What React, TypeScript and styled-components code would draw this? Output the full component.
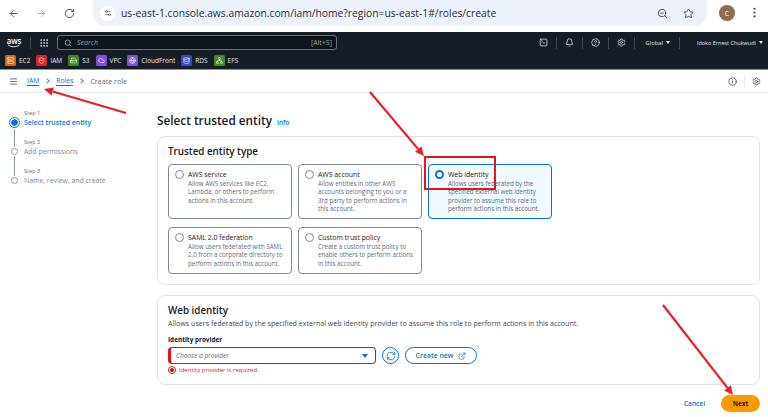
import React from "react";
import styled, { createGlobalStyle } from "styled-components";
import {
  ArrowLeft,
  ArrowRight,
  Bell,
  CircleHelp,
  Cloud,
  Database,
  ExternalLink,
  Globe,
  Grip,
  HardDrive,
  Info,
  Menu,
  MoreVertical,
  Network,
  RotateCw,
  Search,
  Server,
  Settings,
  Settings2,
  ShieldCheck,
  SquareTerminal,
  Star,
  ZoomOut,
  RefreshCw,
} from "lucide-react";

const GlobalStyle = createGlobalStyle`
  html, body { margin: 0; padding: 0; background: #fff; }
  body { font-family: "Open Sans", "Noto Sans", Arial, sans-serif; color: #16191f; }
  * { box-sizing: border-box; }
`;

const Page = styled.div`
  width: 768px;
  height: 417px;
  overflow: hidden;
  position: relative;
  display: flex;
  flex-direction: column;
`;

/* browser chrome */
const BrowserBar = styled.div`
  height: 32px;
  display: flex;
  align-items: flex-start;
  padding-left: 8px;
  background: #fff;
`;
const BrowserBtn = styled.div<{ $dim?: boolean }>`
  width: 28px;
  height: 26px;
  display: flex;
  align-items: center;
  color: ${(p) => (p.$dim ? "#a9abae" : "#444746")};
`;
const UrlPill = styled.div`
  margin-left: 1px;
  width: 614px;
  height: 26px;
  background: #edf2fa;
  border-radius: 0 0 13px 13px;
  display: flex;
  align-items: center;
  padding: 0 0 0 7px;
  color: #1f1f1f;
`;
const SiteChip = styled.div`
  width: 15px;
  height: 15px;
  border-radius: 50%;
  background: #fff;
  display: flex;
  align-items: center;
  justify-content: center;
  margin-right: 6px;
  color: #444746;
`;
const UrlText = styled.div`
  flex: 1;
  font-size: 10.3px;
  font-family: "Open Sans", sans-serif;
  white-space: nowrap;
  color: #2a2d31;
`;
const UrlIcons = styled.div`
  display: flex;
  gap: 15px;
  margin-right: 13px;
  color: #444746;
  align-items: center;
`;
const Avatar = styled.div`
  width: 16px;
  height: 16px;
  margin: 5px 0 0 12px;
  border-radius: 50%;
  background: #8f6a58;
  color: #fff;
  font-size: 7px;
  display: flex;
  align-items: center;
  justify-content: center;
`;
const KebabWrap = styled.div`
  margin: 6px 0 0 13px;
  color: #444746;
  display: flex;
`;

/* aws nav */
const TopNav = styled.div`
  height: 38px;
  background: #161d26;
  display: flex;
  flex-direction: column;
  color: #d5dbdb;
  border-bottom: 1px solid #8a9099;
`;
const NavRow = styled.div`
  height: 20px;
  display: flex;
  align-items: center;
  padding: 2px 0 0 6px;
`;
const Logo = styled.div`
  width: 16px;
  display: flex;
  flex-direction: column;
  align-items: center;
  font-size: 8px;
  font-weight: 600;
  line-height: 7px;
  color: #fff;
  letter-spacing: -0.2px;
`;
const VSep = styled.div`
  width: 1px;
  height: 12px;
  background: #414750;
  margin: 0 8px;
`;
const SearchBox = styled.div`
  margin-left: 8px;
  width: 280px;
  height: 15px;
  border: 1px solid #6b7078;
  border-radius: 3px;
  background: #0f141a;
  display: flex;
  align-items: center;
  padding: 0 4px 0 6px;
  font-size: 7px;
  color: #9aa0a8;
`;
const SearchHint = styled.span`
  flex: 1;
  margin-left: 5px;
  font-style: italic;
`;
const NavRight = styled.div`
  margin-left: auto;
  display: flex;
  align-items: center;
  padding-right: 5px;
  font-size: 5.8px;
  color: #e2e5e8;
  white-space: nowrap;
`;
const NavIconCell = styled.div`
  width: 26px;
  height: 12px;
  display: flex;
  align-items: center;
  justify-content: center;
  border-right: 1px solid #414750;
`;
const NavLabel = styled.div<{ $w: number; $sep?: boolean; $small?: boolean }>`
  width: ${(p) => p.$w}px;
  height: 12px;
  display: flex;
  align-items: center;
  justify-content: flex-end;
  gap: 3px;
  font-size: ${(p) => (p.$small ? "5.5px" : "5.8px")};
  padding-right: ${(p) => (p.$sep ? "9px" : "0")};
  border-right: ${(p) => (p.$sep ? "1px solid #414750" : "none")};
`;
const Caret = styled.span`
  width: 0;
  height: 0;
  border-left: 2px solid transparent;
  border-right: 2px solid transparent;
  border-top: 3px solid #e2e5e8;
`;
const Shortcuts = styled.div`
  height: 18px;
  display: flex;
  align-items: center;
  gap: 6px;
  padding-left: 5px;
  font-size: 6.5px;
  color: #e2e5e8;
`;
const Shortcut = styled.div`
  display: flex;
  align-items: center;
  gap: 3px;
`;
const Tile = styled.div<{ $bg: string }>`
  width: 11px;
  height: 11px;
  border-radius: 1.5px;
  background: ${(p) => p.$bg};
  display: flex;
  align-items: center;
  justify-content: center;
  color: #fff;
`;

/* breadcrumbs */
const CrumbBar = styled.div`
  height: 23px;
  display: flex;
  align-items: center;
  padding: 0 7px 0 9px;
  border-bottom: 1px solid #eeeff0;
  font-size: 7.1px;
  color: #5f6b7a;
`;
const MenuWrap = styled.div`
  display: flex;
  margin-right: 9px;
  color: #424650;
`;
const CrumbLink = styled.span`
  color: #0972d3;
  border-bottom: 1px solid #0972d3;
  line-height: 9px;
  font-size: 6.8px;
`;
const CrumbSep = styled.span`
  width: 4px;
  height: 4px;
  margin: 0 7px 0 6px;
  border-top: 1px solid #7d8998;
  border-right: 1px solid #7d8998;
  transform: rotate(45deg);
`;
const CrumbTools = styled.div`
  margin-left: auto;
  display: flex;
  align-items: center;
  color: #424650;
`;
const CrumbToolSep = styled.div`
  width: 1px;
  height: 12px;
  background: #e9ebed;
  margin: 0 7px;
`;

/* body */
const Body = styled.div`
  flex: 1;
  display: flex;
  min-height: 0;
`;
const Sidebar = styled.div`
  width: 157px;
  padding: 16px 0 0 7px;
`;
const Step = styled.div`
  display: grid;
  grid-template-columns: 14px 1fr;
  column-gap: 3px;
  height: 29px;
`;
const StepTrack = styled.div`
  position: relative;
  padding-top: 9px;
  display: flex;
  flex-direction: column;
  align-items: center;
`;
const StepLine = styled.div`
  flex: 1;
  width: 1px;
  background: #8d99a8;
  margin-top: 1px;
  margin-bottom: -9px;
`;
const StepDot = styled.div<{ $on?: boolean }>`
  width: ${(p) => (p.$on ? 11 : 7)}px;
  height: ${(p) => (p.$on ? 11 : 7)}px;
  margin-top: ${(p) => (p.$on ? -1 : 1)}px;
  border-radius: 50%;
  border: 1px solid ${(p) => (p.$on ? "#0972d3" : "#8d99a8")};
  background: ${(p) =>
    p.$on ? "radial-gradient(circle, #0972d3 0 3px, #fff 3.4px)" : "#fff"};
  flex-shrink: 0;
`;
const StepSmall = styled.div`
  font-size: 5.6px;
  line-height: 8px;
  color: #5f6b7a;
`;
const StepName = styled.div<{ $on?: boolean }>`
  font-size: 6.9px;
  line-height: 11px;
  font-weight: ${(p) => (p.$on ? 600 : 400)};
  color: ${(p) => (p.$on ? "#0972d3" : "#7d8998")};
  white-space: nowrap;
`;

const Main = styled.div`
  width: 603px;
  padding-top: 19px;
`;
const PageTitle = styled.div`
  display: flex;
  align-items: baseline;
  gap: 5px;
  height: 24px;
  font-size: 11.8px;
  font-weight: 600;
  color: #16191f;
`;
const InfoLink = styled.span`
  font-size: 6.4px;
  font-weight: 600;
  color: #0972d3;
`;
const Panel = styled.div<{ $h: number }>`
  height: ${(p) => p.$h}px;
  border: 1px solid #e0e2e4;
  border-radius: 8px;
  padding: 8px 10px 0;
`;
const PanelTitle = styled.div`
  font-size: 9.8px;
  font-weight: 600;
  line-height: 14px;
`;
const CardGrid = styled.div`
  margin-top: 5px;
  display: grid;
  grid-template-columns: repeat(3, 124px);
  grid-template-rows: 55px 47px;
  column-gap: 6px;
  row-gap: 8px;
`;
const Card = styled.div<{ $on?: boolean }>`
  border: 1px solid ${(p) => (p.$on ? "#0972d3" : "#7d8998")};
  background: ${(p) => (p.$on ? "#f1faff" : "#fff")};
  border-radius: 4px;
  padding: 5px 6px 3px;
  display: grid;
  grid-template-columns: 9px 1fr;
  column-gap: 4px;
`;
const Radio = styled.div<{ $on?: boolean }>`
  width: 9px;
  height: 9px;
  margin-top: 0;
  border-radius: 50%;
  border: ${(p) => (p.$on ? "2.5px solid #0972d3" : "1px solid #7d8998")};
  background: #fff;
`;
const CardTitle = styled.div`
  font-size: 6.9px;
  line-height: 10px;
  font-weight: 500;
  color: #16191f;
  white-space: nowrap;
`;
const CardDesc = styled.div`
  font-size: 6.2px;
  line-height: 8.3px;
  color: #5f6b7a;
  white-space: nowrap;
`;
const IdentitySub = styled.div`
  font-size: 7.1px;
  line-height: 10px;
  color: #414750;
  white-space: nowrap;
`;
const FieldLabel = styled.div`
  margin-top: 7px;
  font-size: 6.4px;
  line-height: 9px;
  font-weight: 700;
  color: #16191f;
`;
const FieldRow = styled.div`
  margin-top: 3px;
  display: flex;
  align-items: center;
`;
const Select = styled.div`
  width: 208px;
  height: 17px;
  border: 1px solid #d91515;
  border-left: 3px solid #d91515;
  border-radius: 4px;
  display: flex;
  align-items: center;
  padding: 0 7px 0 5px;
  font-size: 6.6px;
  font-style: italic;
  color: #5f6b7a;
`;
const SelectCaret = styled.span`
  margin-left: auto;
  width: 0;
  height: 0;
  border-left: 3px solid transparent;
  border-right: 3px solid transparent;
  border-top: 4px solid #0972d3;
`;
const RoundBtn = styled.div`
  width: 17px;
  height: 17px;
  margin-left: 6px;
  border: 1px solid #0972d3;
  border-radius: 50%;
  color: #0972d3;
  display: flex;
  align-items: center;
  justify-content: center;
`;
const CreateBtn = styled.div`
  width: 72px;
  height: 17px;
  margin-left: 6px;
  border: 1px solid #0972d3;
  border-radius: 9px;
  color: #0972d3;
  font-size: 6.9px;
  font-weight: 600;
  display: flex;
  align-items: center;
  justify-content: center;
  gap: 5px;
`;
const ErrorRow = styled.div`
  margin-top: 2px;
  display: flex;
  align-items: center;
  gap: 3px;
  font-size: 6px;
  color: #d91515;
`;
const ErrorDot = styled.span`
  width: 8px;
  height: 8px;
  border-radius: 50%;
  border: 1px solid #d91515;
  background: radial-gradient(circle, #d91515 0 1.6px, #fff 2px);
`;
const Footer = styled.div`
  margin-top: 10px;
  display: flex;
  align-items: center;
  justify-content: flex-end;
  gap: 16px;
`;
const CancelLink = styled.span`
  color: #0972d3;
  font-size: 6.6px;
  font-weight: 600;
`;
const NextBtn = styled.div`
  width: 39px;
  height: 17px;
  border-radius: 9px;
  background: #ff9900;
  color: #16191f;
  font-size: 6.4px;
  font-weight: 700;
  display: flex;
  align-items: center;
  justify-content: center;
`;
const Spacer = styled.div`
  height: 10px;
`;

/* annotations lying over the page */
const Overlay = styled.svg`
  position: absolute;
  inset: 0;
  pointer-events: none;
`;

const services = [
  { name: "EC2", bg: "#d86613", Icon: Server },
  { name: "IAM", bg: "#d6242d", Icon: ShieldCheck },
  { name: "S3", bg: "#3f8624", Icon: HardDrive },
  { name: "VPC", bg: "#7d4fe0", Icon: Cloud },
  { name: "CloudFront", bg: "#7d4fe0", Icon: Globe },
  { name: "RDS", bg: "#3b48cc", Icon: Database },
  { name: "EFS", bg: "#3f8624", Icon: Network },
];

const cards = [
  { title: "AWS service", lines: ["Allow AWS services like EC2,", "Lambda, or others to perform", "actions in this account."] },
  { title: "AWS account", lines: ["Allow entities in other AWS", "accounts belonging to you or a", "3rd party to perform actions in", "this account."] },
  { title: "Web identity", on: true, lines: ["Allows users federated by the", "specified external web identity", "provider to assume this role to", "perform actions in this account."] },
  { title: "SAML 2.0 federation", lines: ["Allow users federated with SAML", "2.0 from a corporate directory to", "perform actions in this account."] },
  { title: "Custom trust policy", lines: ["Create a custom trust policy to", "enable others to perform actions", "in this account."] },
];

const steps = [
  { small: "Step 1", name: "Select trusted entity", on: true },
  { small: "Step 2", name: "Add permissions" },
  { small: "Step 3", name: "Name, review, and create" },
];

const Arrow = ({ x1, y1, x2, y2 }: { x1: number; y1: number; x2: number; y2: number }) => {
  const a = Math.atan2(y2 - y1, x2 - x1);
  const len = 9;
  const w = 4.2;
  const bx = x2 - Math.cos(a) * len;
  const by = y2 - Math.sin(a) * len;
  const nx = -Math.sin(a) * w;
  const ny = Math.cos(a) * w;
  return (
    <g>
      <line x1={x1} y1={y1} x2={bx} y2={by} stroke="#ee1c25" strokeWidth={2.2} />
      <polygon points={`${x2},${y2} ${bx + nx},${by + ny} ${bx - nx},${by - ny}`} fill="#ee1c25" />
    </g>
  );
};

export default function App() {
  return (
    <Page>
      <GlobalStyle />
      <BrowserBar>
        <BrowserBtn><ArrowLeft size={11} /></BrowserBtn>
        <BrowserBtn $dim><ArrowRight size={11} /></BrowserBtn>
        <BrowserBtn><RotateCw size={11} /></BrowserBtn>
        <UrlPill>
          <SiteChip><Settings2 size={8} /></SiteChip>
          <UrlText>us-east-1.console.aws.amazon.com/iam/home?region=us-east-1#/roles/create</UrlText>
          <UrlIcons>
            <ZoomOut size={11} />
            <Star size={11} />
          </UrlIcons>
        </UrlPill>
        <Avatar>C</Avatar>
        <KebabWrap><MoreVertical size={13} /></KebabWrap>
      </BrowserBar>

      <TopNav>
        <NavRow>
          <Logo>
            aws
            <svg width="14" height="4" viewBox="0 0 14 4">
              <path d="M1 0.8C4 3.4 9 3.4 12.4 1" fill="none" stroke="#fff" strokeWidth="0.9" />
            </svg>
          </Logo>
          <VSep />
          <Grip size={10} color="#e2e5e8" />
          <SearchBox>
            <Search size={8} color="#c5c9ce" />
            <SearchHint>Search</SearchHint>
            <span>[Alt+S]</span>
          </SearchBox>
          <NavRight>
            <NavIconCell><SquareTerminal size={9} /></NavIconCell>
            <NavIconCell><Bell size={9} /></NavIconCell>
            <NavIconCell><CircleHelp size={9} /></NavIconCell>
            <NavIconCell><Settings size={9} /></NavIconCell>
            <NavLabel $w={45} $sep>Global <Caret /></NavLabel>
            <NavLabel $w={83} $small>Idoko Ernest Chukwudi <Caret /></NavLabel>
          </NavRight>
        </NavRow>
        <Shortcuts>
          {services.map(({ name, bg, Icon }) => (
            <Shortcut key={name}>
              <Tile $bg={bg}><Icon size={7} /></Tile>
              {name}
            </Shortcut>
          ))}
        </Shortcuts>
      </TopNav>

      <CrumbBar>
        <MenuWrap><Menu size={9} /></MenuWrap>
        <CrumbLink>IAM</CrumbLink>
        <CrumbSep />
        <CrumbLink>Roles</CrumbLink>
        <CrumbSep />
        Create role
        <CrumbTools>
          <Info size={9} />
          <CrumbToolSep />
          <Settings size={9} />
        </CrumbTools>
      </CrumbBar>

      <Body>
        <Sidebar>
          {steps.map((s, i) => (
            <Step key={s.small}>
              <StepTrack>
                <StepDot $on={s.on} />
                {i < steps.length - 1 && <StepLine />}
              </StepTrack>
              <div>
                <StepSmall>{s.small}</StepSmall>
                <StepName $on={s.on}>{s.name}</StepName>
              </div>
            </Step>
          ))}
        </Sidebar>
        <Main>
          <PageTitle>
            Select trusted entity <InfoLink>Info</InfoLink>
          </PageTitle>
          <Panel $h={149}>
            <PanelTitle>Trusted entity type</PanelTitle>
            <CardGrid>
              {cards.map((c) => (
                <Card key={c.title} $on={c.on}>
                  <Radio $on={c.on} />
                  <div>
                    <CardTitle>{c.title}</CardTitle>
                    {c.lines.map((l) => (
                      <CardDesc key={l}>{l}</CardDesc>
                    ))}
                  </div>
                </Card>
              ))}
            </CardGrid>
          </Panel>
          <Spacer />
          <Panel $h={90}>
            <PanelTitle>Web identity</PanelTitle>
            <IdentitySub>
              Allows users federated by the specified external web identity provider to assume this role to perform actions in this account.
            </IdentitySub>
            <FieldLabel>Identity provider</FieldLabel>
            <FieldRow>
              <Select>
                Choose a provider
                <SelectCaret />
              </Select>
              <RoundBtn><RefreshCw size={10} /></RoundBtn>
              <CreateBtn>Create new <ExternalLink size={8} /></CreateBtn>
            </FieldRow>
            <ErrorRow>
              <ErrorDot />
              Identity provider is required.
            </ErrorRow>
          </Panel>
          <Footer>
            <CancelLink>Cancel</CancelLink>
            <NextBtn>Next</NextBtn>
          </Footer>
        </Main>
      </Body>

      <Overlay width={768} height={417} viewBox="0 0 768 417">
        <Arrow x1={126} y1={113} x2={44} y2={89} />
        <Arrow x1={370} y1={92} x2={424} y2={156} />
        <Arrow x1={663} y1={305} x2={733} y2={395} />
        <rect x={425} y={157} width={70} height={32} fill="none" stroke="#e8141c" strokeWidth={2} />
      </Overlay>
    </Page>
  );
}
